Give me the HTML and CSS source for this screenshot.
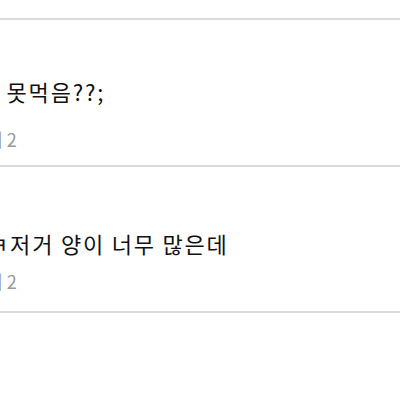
FILE: index.html
```html
<!DOCTYPE html>
<html>
<head>
    <title>댓글</title>
    <meta name="viewport" content="width=device-width, initial-scale=1.0">
    <link rel="stylesheet" href="styles.css">
</head>
<body>

<div class="comments">
    <div class="comment comment-prev"></div>

    <div class="comment comment-first">
        <p class="comment-text">이거 나 못먹음??;</p>
        <div class="comment-meta">좋아해 2</div>
    </div>

    <div class="comment comment-second">
        <p class="comment-text">ㅋㅋㅋ저거 양이 너무 많은데</p>
        <div class="comment-meta">좋아해 2</div>
    </div>
</div>

</body>
</html>
```

FILE: styles.css
```css
body {
    margin: 0;
    background: #fff;
    font-family: 'Noto Sans CJK KR', 'Noto Sans', sans-serif;
    overflow: hidden;
}
.comments {
    display: flex;
    flex-direction: column;
}
.comment {
    border-bottom: 2px solid #dadada;
    padding: 57px 0 14px;
}
.comment-prev {
    height: 18px;
    padding: 0;
}
.comment-text {
    margin: 0;
    font-size: 22px;
    line-height: 29px;
    letter-spacing: 1.8px;
    color: #111;
    white-space: nowrap;
}
.comment-meta {
    margin-top: 21px;
    margin-left: -47px;
    font-size: 18px;
    line-height: 24px;
    color: #999;
    white-space: nowrap;
}
.comment-first .comment-text {
    margin-left: -73px;
}
.comment-second {
    padding: 62px 0 18px;
}
.comment-second .comment-text {
    margin-left: -56px;
}
.comment-second .comment-meta {
    margin-top: 11px;
}
```
